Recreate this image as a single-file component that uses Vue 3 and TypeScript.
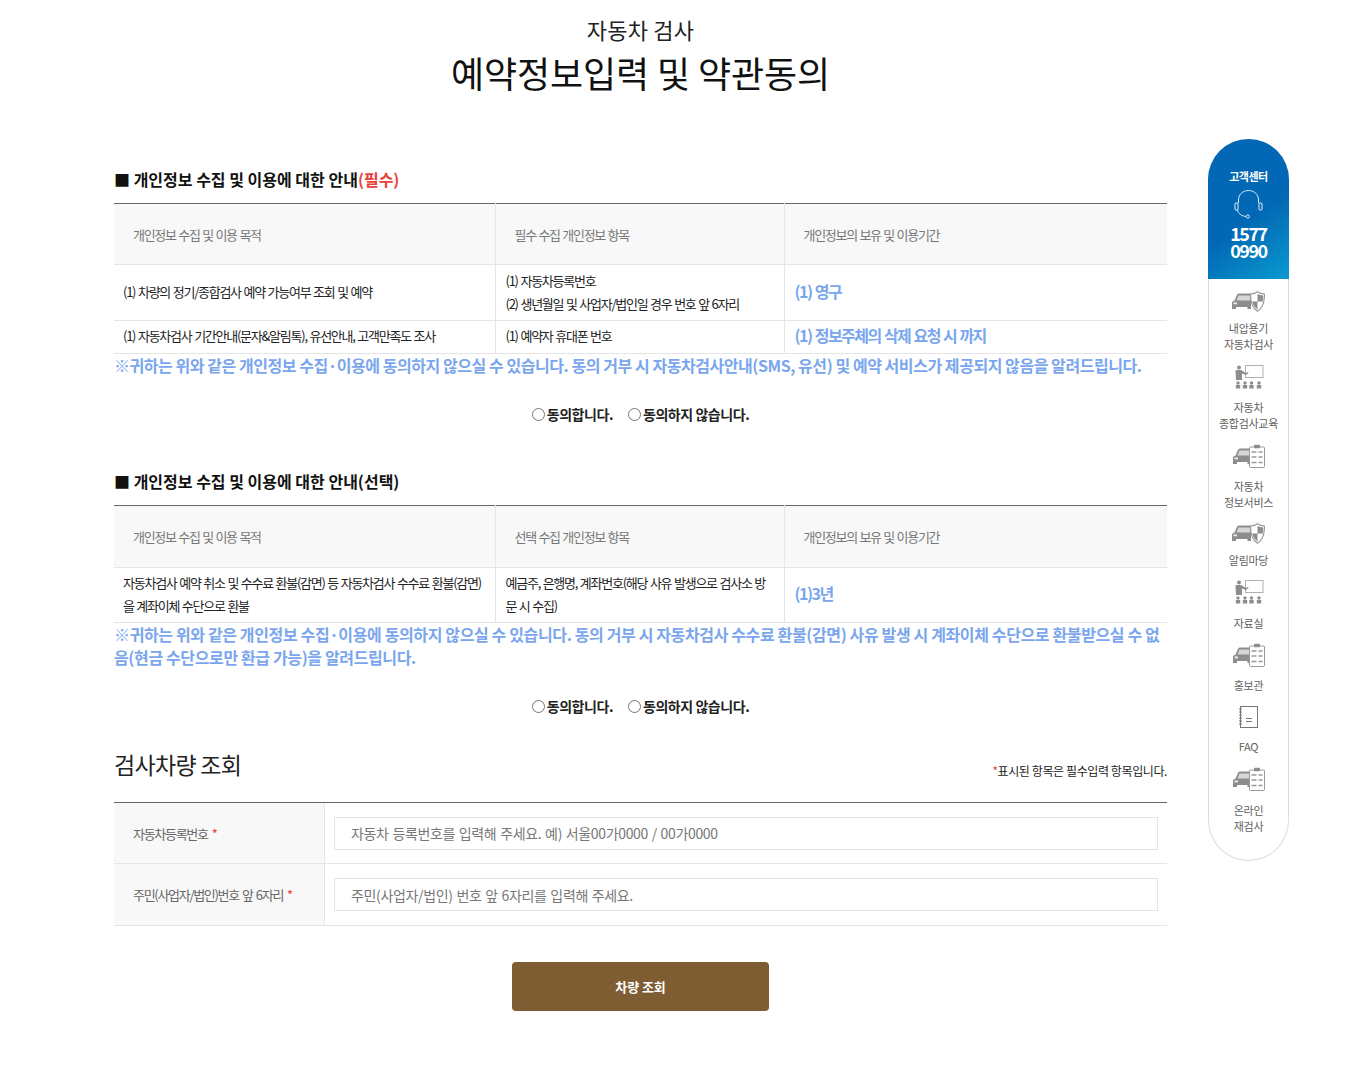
<script setup lang="ts">
interface Side { label: string[]; icon: string }
const side: Side[] = [
  { label: ['내압용기', '자동차검사'], icon: 'shield' },
  { label: ['자동차', '종합검사교육'], icon: 'edu' },
  { label: ['자동차', '정보서비스'], icon: 'clip' },
  { label: ['알림마당'], icon: 'shield' },
  { label: ['자료실'], icon: 'edu' },
  { label: ['홍보관'], icon: 'clip' },
  { label: ['FAQ'], icon: 'note' },
  { label: ['온라인', '재검사'], icon: 'clip' },
]
</script>

<template>
  <div class="page">
    <header class="head">
      <p class="sub">자동차 검사</p>
      <h1 class="title">예약정보입력 및 약관동의</h1>
    </header>

    <section class="s1">
      <h3 class="sec">■ 개인정보 수집 및 이용에 대한 안내<span class="red">(필수)</span></h3>
      <table class="tb">
        <colgroup><col class="c1" /><col class="c2" /><col /></colgroup>
        <thead>
          <tr><th>개인정보 수집 및 이용 목적</th><th>필수 수집 개인정보 항목</th><th>개인정보의 보유 및 이용기간</th></tr>
        </thead>
        <tbody>
          <tr class="r1">
            <td>(1) 차량의 정기/종합검사 예약 가능여부 조회 및 예약</td>
            <td>(1) 자동차등록번호<br />(2) 생년월일 및 사업자/법인일 경우 번호 앞 6자리</td>
            <td class="blue">(1) 영구</td>
          </tr>
          <tr class="r2">
            <td>(1) 자동차검사 기간안내(문자&amp;알림톡), 유선안내, 고객만족도 조사</td>
            <td>(1) 예약자 휴대폰 번호</td>
            <td class="blue">(1) 정보주체의 삭제 요청 시 까지</td>
          </tr>
        </tbody>
      </table>
      <p class="notice">※귀하는 위와 같은 개인정보 수집·이용에 동의하지 않으실 수 있습니다. 동의 거부 시 자동차검사안내(SMS, 유선) 및 예약 서비스가 제공되지 않음을 알려드립니다.</p>
      <div class="agree">
        <label><input type="radio" name="a1" />동의합니다.</label>
        <label><input type="radio" name="a1" />동의하지 않습니다.</label>
      </div>
    </section>

    <section class="s2">
      <h3 class="sec">■ 개인정보 수집 및 이용에 대한 안내(선택)</h3>
      <table class="tb">
        <colgroup><col class="c1" /><col class="c2" /><col /></colgroup>
        <thead>
          <tr><th>개인정보 수집 및 이용 목적</th><th>선택 수집 개인정보 항목</th><th>개인정보의 보유 및 이용기간</th></tr>
        </thead>
        <tbody>
          <tr class="r1">
            <td>자동차검사 예약 취소 및 수수료 환불(감면) 등 자동차검사 수수료 환불(감면)을 계좌이체 수단으로 환불</td>
            <td>예금주, 은행명, 계좌번호(해당 사유 발생으로 검사소 방문 시 수집)</td>
            <td class="blue">(1)3년</td>
          </tr>
        </tbody>
      </table>
      <p class="notice">※귀하는 위와 같은 개인정보 수집·이용에 동의하지 않으실 수 있습니다. 동의 거부 시 자동차검사 수수료 환불(감면) 사유 발생 시 계좌이체 수단으로 환불받으실 수 없음(현금 수단으로만 환급 가능)을 알려드립니다.</p>
      <div class="agree">
        <label><input type="radio" name="a2" />동의합니다.</label>
        <label><input type="radio" name="a2" />동의하지 않습니다.</label>
      </div>
    </section>

    <section class="s3">
      <div class="s3head">
        <h2 class="h2">검사차량 조회</h2>
        <span class="req"><i>*</i>표시된 항목은 필수입력 항목입니다.</span>
      </div>
      <div class="form">
        <div class="frow">
          <div class="flabel">자동차등록번호<i>*</i></div>
          <div class="fval"><input class="inp" placeholder="자동차 등록번호를 입력해 주세요. 예) 서울00가0000 / 00가0000" /></div>
        </div>
        <div class="frow frow2">
          <div class="flabel">주민(사업자/법인)번호 앞 6자리<i>*</i></div>
          <div class="fval"><input class="inp" placeholder="주민(사업자/법인) 번호 앞 6자리를 입력해 주세요." /></div>
        </div>
      </div>
      <div class="btnwrap"><button class="btn" type="button">차량 조회</button></div>
    </section>

    <aside class="side">
      <div class="cs">
        <div class="cs-t">고객센터</div>
        <svg class="cs-i" width="29" height="29" viewBox="0 0 29 29" fill="none" stroke="#dcecf7" stroke-width="1">
          <path d="M4.500 13V10C4.500 4.500 9 .5 14.500 .5S24.500 4.500 24.500 10V13" />
          <rect x="1" y="13" width="3" height="7" rx="1" />
          <rect x="25" y="13" width="3" height="7" rx="1" />
          <path d="M3.500 20c.5 3.500 4 6 8.500 6.500" />
          <circle cx="13.800" cy="26.500" r="1.600" />
        </svg>
        <div class="cs-n">1577<br />0990</div>
      </div>
      <ul class="menu">
        <li v-for="(m, i) in side" :key="i" class="item" :class="'it' + i">
          <svg v-if="m.icon === 'shield'" class="ico" width="33" height="21" viewBox="0 0 33 21">
            <path fill="#8d8d8d" d="M0 18v-7l2.500-1.500 2.300-5.300C5.300 3 6.300 2.500 7.500 2.500H19V18h-3.500v-2H4v2H0z" />
            <path fill="#d6d6d6" d="M6.500 4.500H18V9.500H4.500z" />
            <rect x="1.500" y="11.500" width="3.500" height="1.800" fill="#eee" />
            <path fill="#fff" stroke="#9a9a9a" stroke-width="1.200" d="M25.500 .8c2 1.400 4.200 2.200 7 2.400 0 8-1.800 13.800-7 17-5.200-3.200-7-9-7-17 2.800-.2 5-1 7-2.400z" />
            <path fill="#8d8d8d" d="M25.500 3v7.500h5.200c.3-1.600.4-3.300.4-6-2-.2-3.900-.7-5.600-1.500zM25.500 10.500h-5.300c.7 3.300 2.400 6 5.300 8V10.500z" />
          </svg>
          <svg v-else-if="m.icon === 'edu'" class="ico" width="30" height="25" viewBox="0 0 30 25">
            <rect x="11.500" y=".5" width="17.500" height="12" fill="#fff" stroke="#b0b0b0" />
            <circle cx="5" cy="2.500" r="2" fill="#8d8d8d" />
            <path fill="#8d8d8d" d="M1.500 6c0-.8.5-1 1-1H7l5 3 2-1 .5 1-2.500 2-4-1.500V15H2z" />
            <g fill="#8d8d8d">
              <circle cx="4" cy="18" r="1.700" /><circle cx="11" cy="18" r="1.700" /><circle cx="17.500" cy="18" r="1.700" /><circle cx="25" cy="18" r="1.700" />
              <rect x="1.800" y="20" width="4.400" height="3.500" /><rect x="8.800" y="20" width="4.400" height="3.500" /><rect x="15.300" y="20" width="4.400" height="3.500" /><rect x="22.800" y="20" width="4.400" height="3.500" />
            </g>
          </svg>
          <svg v-else-if="m.icon === 'clip'" class="ico" width="32" height="24" viewBox="0 0 32 24">
            <path fill="#8d8d8d" d="M0 20v-7l2.500-1.500 2.300-5.300C5.300 5 6.300 4.500 7.500 4.500H18V20h-3.500v-2H4v2H0z" />
            <path fill="#d6d6d6" d="M6.500 6.500H18v5H4.500z" />
            <rect x="1.500" y="13.500" width="3.500" height="1.800" fill="#eee" />
            <rect x="16.500" y="3" width="15" height="20.500" rx="1" fill="#fff" stroke="#9a9a9a" />
            <rect x="21" y=".8" width="6" height="3.500" rx="1" fill="#8d8d8d" />
            <path stroke="#9a9a9a" stroke-width="1.400" fill="none" d="M18.500 8h5m2 0h4M18.500 13h5m2 0h4M18.500 18.500h5m2 0h4" />
          </svg>
          <svg v-else class="ico" width="19" height="22" viewBox="0 0 19 22" fill="none" stroke="#777">
            <rect x="1.500" y=".5" width="17" height="21" />
            <path d="M0 3h3M0 6h3M0 9h3M0 12h3M0 15h3M0 18h3M7 12.500h6M7 15.500h6" />
          </svg>
          <span v-for="l in m.label" :key="l" class="lab">{{ l }}</span>
        </li>
      </ul>
    </aside>
  </div>
</template>

<style>
html, body { margin: 0; background: #fff; }
</style>

<style scoped>
.page {
  position: relative;
  width: 1345px;
  height: 1078px;
  overflow: hidden;
  box-sizing: border-box;
  padding: 0 178px 0 114px;
  font-family: "Noto Sans CJK KR", "Noto Sans", sans-serif;
  color: #111;
}
.head { text-align: center; padding-top: 13px; height: 152px; box-sizing: border-box; }
.sub { margin: 0 0 1px; font-size: 22px; line-height: 33px; font-weight: 400; color: #222; letter-spacing: .2px; }
.title { margin: 0; font-size: 36px; line-height: 50px; font-weight: 400; color: #111; letter-spacing: -.1px; }
.sec { margin: 0; height: 51px; line-height: 54px; font-size: 16px; font-weight: 700; letter-spacing: 0; color: #111; }
.red { color: #e8413a; }
.tb { width: 1053px; border-collapse: collapse; table-layout: fixed; border-top: 1px solid #666; }
.c1 { width: 381px; }
.c2 { width: 289px; }
th {
  height: 60px;
  background: #f8f8f8;
  text-align: left;
  padding: 0 0 0 19px;
  font-size: 13px;
  font-weight: 400;
  color: #777;
  letter-spacing: -1.3px;
  word-spacing: 1px;
  border-bottom: 1px solid #e5e5e5;
  border-right: 1px solid #e5e5e5;
}
th:last-child, td:last-child { border-right: 0; }
td {
  padding: 0 9px 2px 9px;
  font-size: 13px;
  line-height: 23px;
  color: #222;
  letter-spacing: -1.25px;
  word-spacing: 1px;
  border-bottom: 1px solid #e5e5e5;
  border-right: 1px solid #e5e5e5;
}
td:nth-child(2) { padding-left: 10px; }
.r1 td { height: 53px; }
.r2 td { height: 29px; padding-bottom: 3px; }
.s2 th { height: 61px; }
.s2 .r1 td { height: 52px; }
.s2 .r1 td:nth-child(2) { padding-right: 15px; }
td.blue { font-size: 16px; font-weight: 700; color: #7aa6ee; letter-spacing: -1.5px; word-spacing: 1px; padding-left: 10px; }
.s2 .r1 td.blue { height: 51px; padding-bottom: 3px; }
.notice { margin: 0; font-size: 16px; line-height: 23px; font-weight: 700; color: #7aa6ee; letter-spacing: -.45px; }
.s2 .notice { letter-spacing: -.37px; }
.agree { display: flex; justify-content: center; gap: 15px; font-size: 14px; font-weight: 700; color: #222; letter-spacing: -.45px; padding-top: 23px; height: 28px; line-height: 28px; }
.agree label { display: flex; align-items: center; }
.agree input { margin: 1px 2px 0 0; width: 13px; height: 13px; }
.s1 { height: 302px; }
.s2 { height: 268px; }
.s3head { display: flex; justify-content: space-between; align-items: flex-end; height: 70px; }
.h2 { margin: 0; font-size: 23px; line-height: 36px; font-weight: 400; color: #222; letter-spacing: -.7px; padding-bottom: 10px; }
.req { font-size: 12px; line-height: 18px; color: #222; letter-spacing: -.4px; padding-bottom: 12px; }
.req i, .flabel i { font-style: normal; color: #e8413a; }
.flabel i { margin-left: 4px; letter-spacing: 0; }
.form { border-top: 1px solid #666; margin-top: 10px; width: 1053px; }
.frow { display: flex; height: 60px; border-bottom: 1px solid #e5e5e5; }
.frow2 { height: 61px; }
.flabel { width: 211px; background: #f8f8f8; border-right: 1px solid #e5e5e5; padding-left: 19px; box-sizing: border-box; font-size: 13px; color: #666; display: flex; align-items: center; letter-spacing: -1.3px; word-spacing: 1.5px; white-space: pre; }
.fval { flex: 1; display: flex; align-items: center; padding: 0 9px; }
.inp { width: 100%; height: 33px; box-sizing: border-box; border: 1px solid #e5e5e5; padding: 0 16px; font: 400 14px "Noto Sans CJK KR", "Noto Sans", sans-serif; color: #222; letter-spacing: -.35px; word-spacing: 1px; outline: 0; }
.inp::placeholder { color: #777; opacity: 1; }
.btnwrap { display: flex; justify-content: center; padding-top: 36px; }
.btn { width: 257px; height: 49px; border: 0; border-radius: 4px; background: #7f5d32; color: #fff; font: 700 13px "Noto Sans CJK KR", "Noto Sans", sans-serif; letter-spacing: -.1px; }
.side { position: absolute; left: 1208px; top: 139px; width: 81px; height: 722px; box-sizing: border-box; border: 1px solid #ddd; border-top: 0; border-radius: 41px; background: #fff; }
.cs { margin: 0 -1px; height: 140px; border-radius: 41px 41px 0 0; background: linear-gradient(145deg, #0267b4 55%, #0a9ad0 100%); color: #fff; text-align: center; box-sizing: border-box; padding-top: 28px; }
.cs-t { font-size: 11px; font-weight: 700; line-height: 18px; letter-spacing: -.5px; }
.cs-i { display: block; margin: 5px auto 0; }
.cs-n { font-size: 18px; font-weight: 700; line-height: 17px; letter-spacing: -1.5px; margin-top: 6px; }
.menu { list-style: none; margin: 0; padding: 12px 0 0; }
.item { display: flex; flex-direction: column; align-items: center; text-align: center; box-sizing: border-box; height: 79px; }
.ico { display: block; margin-bottom: 9px; flex: none; }
.lab { font-size: 11px; line-height: 16px; color: #5f5f5f; letter-spacing: -.3px; white-space: nowrap; }
.it0 { height: 74px; }
.it1 { height: 79px; }
.it2 { height: 79px; }
.it3 { height: 57px; }
.it4 { height: 63px; }
.it5 { height: 63px; }
.it6 { height: 61px; }
.it0 .ico, .it3 .ico { margin-bottom: 8px; }
.it2 .ico, .it4 .ico, .it5 .ico, .it6 .ico { margin-bottom: 10px; }
.it7 .ico { margin-bottom: 11px; }
</style>
